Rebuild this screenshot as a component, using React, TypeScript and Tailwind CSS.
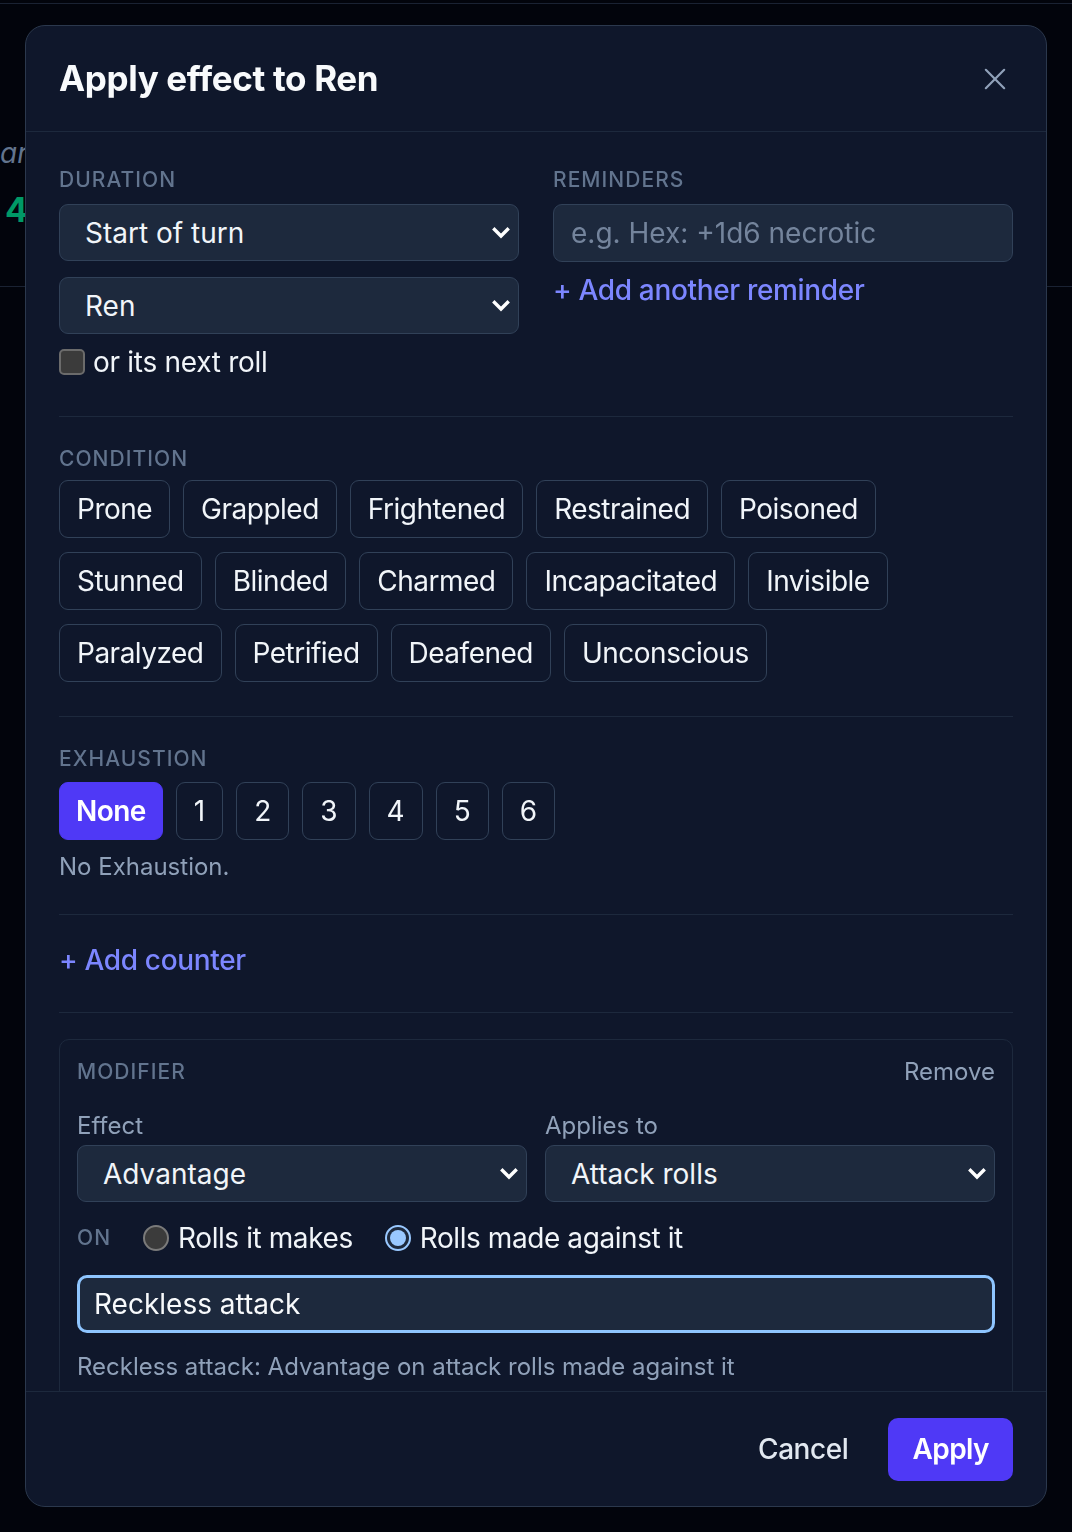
import React, { useState } from 'react';

const conditionRows = [
  ['Prone', 'Grappled', 'Frightened', 'Restrained', 'Poisoned'],
  ['Stunned', 'Blinded', 'Charmed', 'Incapacitated', 'Invisible'],
  ['Paralyzed', 'Petrified', 'Deafened', 'Unconscious'],
];

const levels = ['None', '1', '2', '3', '4', '5', '6'];

const Chevron = () => (
  <svg width="18" height="14" viewBox="0 0 18 14" className="pointer-events-none absolute right-[8px] top-1/2 -translate-y-1/2">
    <polyline points="2.5,3.5 9,10 15.5,3.5" fill="none" stroke="#ffffff" strokeWidth="3.4" strokeLinecap="square" />
  </svg>
);

const FakeSelect: React.FC<{ value: string }> = ({ value }) => (
  <div className="relative flex h-[57px] items-center rounded-[9px] border border-[#314158] bg-[#1d293d] pl-[25px] text-[28px] text-[#f1f5f9]">
    {value}
    <Chevron />
  </div>
);

const SectionLabel: React.FC<{ children: React.ReactNode; className?: string }> = ({ children, className = '' }) => (
  <div className={`text-[21px] font-medium uppercase leading-[28px] tracking-[0.05em] text-[#62748e] ${className}`}>{children}</div>
);

const Radio: React.FC<{ checked: boolean }> = ({ checked }) =>
  checked ? (
    <span className="flex h-[26px] w-[26px] items-center justify-center rounded-full border-[2px] border-[#99c8ff] bg-[#1d293d]">
      <span className="h-[16px] w-[16px] rounded-full bg-[#99c8ff]" />
    </span>
  ) : (
    <span className="h-[26px] w-[26px] rounded-full border-[2px] border-[#7a7a7a] bg-[#3b3b3b]" />
  );

export default function App() {
  const [exhaustion, setExhaustion] = useState('None');
  const [against, setAgainst] = useState(true);

  return (
    <div className="relative min-h-screen overflow-hidden bg-[#02040c] font-['Inter',sans-serif]">
      {/* page behind the dialog */}
      <div className="h-[4px] border-b border-[#1a2233]" />
      <div className="h-[283px] border-b border-[#1a2233] pt-[129px]">
        <div className="text-[28px] italic leading-[40px] text-[#62748e]">ar</div>
        <div className="pl-[5px] pt-[17px] text-[34px] font-bold leading-[40px] text-[#009966]">4</div>
      </div>

      <div className="fixed bottom-[25px] left-[25px] right-[25px] top-[25px] flex flex-col overflow-hidden rounded-[20px] border border-[#2b384d] bg-[#0f172b]">
        <div className="flex h-[106px] shrink-0 items-center justify-between border-b border-[#1d293d] px-[33px]">
          <h2 className="text-[35px] font-bold tracking-[-0.01em] text-[#f8fafc]">Apply effect to Ren</h2>
          <button className="flex h-[36px] w-[36px] items-center justify-center text-[#90a1b9]">
            <svg width="22" height="22" viewBox="0 0 24 24" fill="none" stroke="currentColor" strokeWidth="2.4" strokeLinecap="round">
              <path d="M2 2L22 22M22 2L2 22" />
            </svg>
          </button>
        </div>

        <div className="flex-1 overflow-hidden px-[33px]">
          {/* duration + reminders */}
          <div className="grid grid-cols-2 gap-x-[34px] border-b border-[#1d293d] pb-[37px] pt-[34px]">
            <div>
              <SectionLabel className="mb-[10px]">Duration</SectionLabel>
              <div className="flex flex-col gap-[16px]">
                <FakeSelect value="Start of turn" />
                <FakeSelect value="Ren" />
              </div>
              <label className="mt-[11px] flex h-[34px] items-center gap-[8px] text-[28px] tracking-[-0.01em] text-[#f1f5f9]">
                <span className="h-[26px] w-[26px] rounded-[5px] border-[2px] border-[#6b6b6b] bg-[#3b3b3b]" />
                or its next roll
              </label>
            </div>
            <div>
              <SectionLabel className="mb-[10px]">Reminders</SectionLabel>
              <input
                className="h-[58px] w-full rounded-[9px] border border-[#314158] bg-[#1d293d] px-[17px] text-[28px] text-[#f1f5f9] outline-none placeholder:text-[#74849c]"
                placeholder="e.g. Hex: +1d6 necrotic"
              />
              <button className="mt-[11px] text-[28px] font-medium leading-[34px] tracking-[-0.012em] text-[#7c86ff]">+ Add another reminder</button>
            </div>
          </div>

          {/* condition */}
          <div className="border-b border-[#1d293d] pb-[34px] pt-[28px]">
            <SectionLabel className="mb-[7px]">Condition</SectionLabel>
            <div className="flex flex-col gap-[14px]">
              {conditionRows.map((row, i) => (
                <div key={i} className="flex gap-[13px]">
                  {row.map((c) => (
                    <button
                      key={c}
                      className="h-[58px] rounded-[9px] border border-[#314158] px-[17px] text-[28px] tracking-[-0.018em] text-[#f1f5f9]"
                    >
                      {c}
                    </button>
                  ))}
                </div>
              ))}
            </div>
          </div>

          {/* exhaustion */}
          <div className="border-b border-[#1d293d] pb-[31px] pt-[28px]">
            <SectionLabel className="mb-[9px]">Exhaustion</SectionLabel>
            <div className="flex gap-[13px]">
              {levels.map((l) => (
                <button
                  key={l}
                  onClick={() => setExhaustion(l)}
                  className={
                    exhaustion === l
                      ? 'h-[58px] rounded-[9px] border border-[#4f39f6] bg-[#4f39f6] px-[16px] text-[28px] font-semibold tracking-[-0.02em] text-white'
                      : 'h-[58px] min-w-[47px] rounded-[9px] border border-[#314158] px-[17px] text-[28px] text-[#f1f5f9]'
                  }
                >
                  {l}
                </button>
              ))}
            </div>
            <p className="mt-[11px] text-[24px] leading-[32px] text-[#90a1b9]">No Exhaustion.</p>
          </div>

          {/* counter */}
          <div className="border-b border-[#1d293d] pb-[35px] pt-[28px]">
            <button className="text-[28px] font-medium leading-[34px] tracking-[-0.012em] text-[#7c86ff]">+ Add counter</button>
          </div>

          {/* modifier */}
          <div className="mt-[26px] rounded-[10px] border border-[#1d293d] px-[17px] pb-[24px] pt-[18px]">
            <div className="flex items-center justify-between">
              <SectionLabel>Modifier</SectionLabel>
              <button className="text-[24px] leading-[28px] text-[#90a1b9]">Remove</button>
            </div>
            <div className="mt-[24px] grid grid-cols-2 gap-x-[18px]">
              <div>
                <div className="mb-[3px] text-[24px] leading-[32px] text-[#90a1b9]">Effect</div>
                <FakeSelect value="Advantage" />
              </div>
              <div>
                <div className="mb-[3px] text-[24px] leading-[32px] text-[#90a1b9]">Applies to</div>
                <FakeSelect value="Attack rolls" />
              </div>
            </div>
            <div className="mt-[19px] flex h-[34px] items-center gap-[32px]">
              <span className="text-[21px] font-medium uppercase tracking-[0.05em] text-[#62748e]">On</span>
              <label className="flex items-center gap-[9px] text-[28px] tracking-[-0.015em] text-[#f1f5f9]" onClick={() => setAgainst(false)}>
                <Radio checked={!against} />
                Rolls it makes
              </label>
              <label className="flex items-center gap-[9px] text-[28px] tracking-[-0.015em] text-[#f1f5f9]" onClick={() => setAgainst(true)}>
                <Radio checked={against} />
                Rolls made against it
              </label>
            </div>
            <input
              className="mt-[20px] h-[58px] w-full rounded-[10px] border-[3px] border-[#8ec5ff] bg-[#1d293d] px-[14px] text-[28px] text-[#f8fafc] outline-none"
              defaultValue="Reckless attack"
            />
            <p className="mt-[18px] text-[24px] leading-[32px] text-[#90a1b9]">
              Reckless attack: Advantage on attack rolls made against it
            </p>
          </div>
        </div>

        <div className="flex h-[115px] shrink-0 items-center justify-end gap-[20px] border-t border-[#1d293d] px-[33px]">
          <button className="px-[20px] text-[28px] font-medium tracking-[-0.015em] text-[#e2e8f0]">Cancel</button>
          <button className="h-[63px] rounded-[10px] bg-[#4f39f6] px-[24px] text-[28px] font-semibold tracking-[-0.02em] text-white">Apply</button>
        </div>
      </div>
    </div>
  );
}
